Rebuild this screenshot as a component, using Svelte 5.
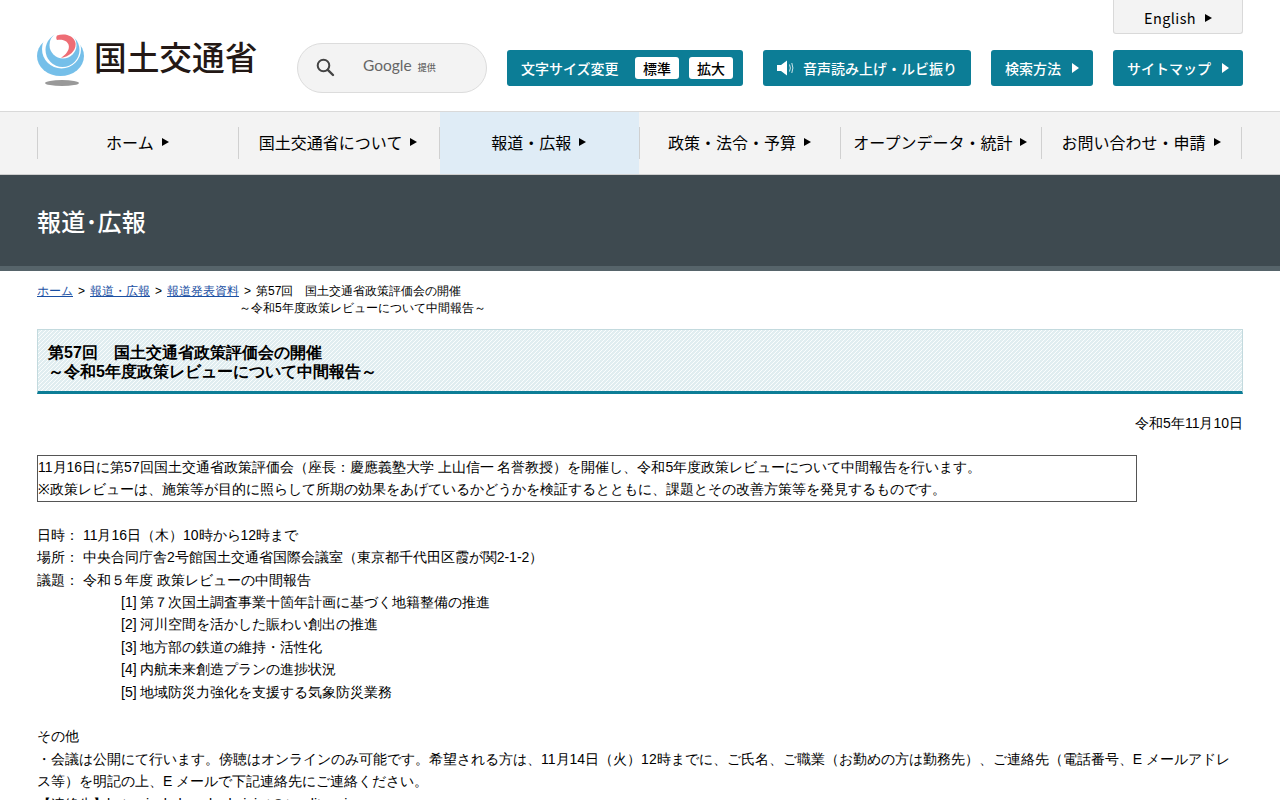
<script>
  const nav = [
    { label: 'ホーム' },
    { label: '国土交通省について' },
    { label: '報道・広報', active: true },
    { label: '政策・法令・予算' },
    { label: 'オープンデータ・統計' },
    { label: 'お問い合わせ・申請' }
  ];
  const items = [
    '[1] 第７次国土調査事業十箇年計画に基づく地籍整備の推進',
    '[2] 河川空間を活かした賑わい創出の推進',
    '[3] 地方部の鉄道の維持・活性化',
    '[4] 内航未来創造プランの進捗状況',
    '[5] 地域防災力強化を支援する気象防災業務'
  ];
</script>

<div class="page">
  <header class="head">
    <div class="logo">
      <svg width="48" height="53" viewBox="0 0 48 53" aria-hidden="true">
        <ellipse cx="23.500" cy="22" rx="23.500" ry="20" fill="#75bfe9"/>
        <circle cx="24.500" cy="15" r="19.500" fill="#fff"/>
        <circle cx="25.500" cy="16" r="17" fill="#75bfe9"/>
        <circle cx="26" cy="11" r="13.500" fill="#fff"/>
        <path d="M20 1.500 C27 -1 37 1 38.500 9 C39.500 16 33 22.500 24 24 C30 20 33 15 31.500 10.500 C30 6.500 25 5 20 6 C19 4.500 19 3 20 1.500 Z" fill="#ee6d75"/>
        <ellipse cx="25" cy="49" rx="17" ry="3" fill="#999"/>
      </svg>
      <span class="logo-text">国土交通省</span>
    </div>

    <div class="search">
      <svg width="20" height="20" viewBox="0 0 20 20" aria-hidden="true">
        <circle cx="7.500" cy="7.500" r="5.800" fill="none" stroke="#444" stroke-width="2"/>
        <path d="M11.800 11.800 L17 17" stroke="#444" stroke-width="2.400" stroke-linecap="round"/>
      </svg>
      <span class="google">Google</span>
      <span class="teikyo">提供</span>
    </div>

    <div class="tools">
      <div class="english-row"><a class="english">English<i class="tri dark"></i></a></div>
      <div class="buttons">
        <div class="btn size">
          <span class="size-label">文字サイズ変更</span>
          <span class="chip">標準</span>
          <span class="chip">拡大</span>
        </div>
        <a class="btn voice">
          <svg width="18" height="16" viewBox="0 0 18 16" aria-hidden="true">
            <path d="M0 5 H4 L10 0.500 V15.500 L4 11 H0 Z" fill="#fff"/>
            <path d="M12.500 4.500 Q14.200 8 12.500 11.500 M14.800 3 Q17 8 14.800 13" fill="none" stroke="#fff" stroke-width="0.800"/>
          </svg>
          音声読み上げ・ルビ振り
        </a>
        <a class="btn method">検索方法<i class="tri white"></i></a>
        <a class="btn map">サイトマップ<i class="tri white"></i></a>
      </div>
    </div>
  </header>

  <nav class="nav">
    <ul>
      {#each nav as n}
        <li class:active={n.active}><a>{n.label}<i class="tri small"></i></a></li>
      {/each}
    </ul>
  </nav>

  <div class="band"><h2>報道･広報</h2></div>

  <main class="main">
    <div class="crumbs">
      <a href="#a">ホーム</a><span class="sep">&gt;</span><a href="#a">報道・広報</a><span class="sep">&gt;</span><a href="#a">報道発表資料</a><span class="crumb-last"><span class="sep">&gt;</span>第57回　国土交通省政策評価会の開催<br />～令和5年度政策レビューについて中間報告～</span>
    </div>

    <h1 class="title">第57回　国土交通省政策評価会の開催<br />～令和5年度政策レビューについて中間報告～</h1>

    <p class="date">令和5年11月10日</p>

    <div class="box">
      11月16日に第57回国土交通省政策評価会（座長：慶應義塾大学 上山信一 名誉教授）を開催し、令和5年度政策レビューについて中間報告を行います。<br />
      ※政策レビューは、施策等が目的に照らして所期の効果をあげているかどうかを検証するとともに、課題とその改善方策等を発見するものです。
    </div>

    <div class="body">
      <p>日時： 11月16日（木）10時から12時まで</p>
      <p>場所： 中央合同庁舎2号館国土交通省国際会議室（東京都千代田区霞が関2-1-2）</p>
      <p>議題： 令和５年度 政策レビューの中間報告</p>
      <ul class="agenda">
        {#each items as it}<li>{it}</li>{/each}
      </ul>
      <p class="other">その他</p>
      <p>・会議は公開にて行います。傍聴はオンラインのみ可能です。希望される方は、11月14日（火）12時までに、ご氏名、ご職業（お勤めの方は勤務先）、ご連絡先（電話番号、E メールアドレス等）を明記の上、E メールで下記連絡先にご連絡ください。</p>
      <p>【連絡先】hqt-seisakuhyouka-kaigi（＠）mlit.go.jp</p>
    </div>
  </main>
</div>

<style>
  :global(body) {
    margin: 0;
    background: #fff;
    color: #000;
    font-family: "Liberation Sans", sans-serif;
  }
  .page { width: 1280px; height: 800px; overflow: hidden; }
  a { color: inherit; text-decoration: none; }
  .head, .nav, .band { font-family: "Noto Sans CJK JP", "Noto Sans", sans-serif; }

  .head {
    height: 111px;
    box-sizing: border-box;
    padding: 0 37px;
    display: flex;
    position: relative;
  }
  .logo { width: 260px; display: flex; align-items: flex-start; padding-top: 34px; box-sizing: border-box; }
  .logo svg { flex: none; }
  .logo-text {
    font-family: "Noto Sans CJK JP", sans-serif;
    font-size: 32.700px;
    line-height: 43px;
    color: #231815;
    font-weight: 500;
    margin-left: 9px;
    white-space: nowrap;
  }
  .search {
    width: 190px;
    height: 50px;
    margin-top: 43px;
    box-sizing: border-box;
    border: 1px solid #dcdcdc;
    border-radius: 25px;
    background: #f3f3f3;
    display: flex;
    align-items: center;
    padding-left: 18px;
    flex: none;
  }
  .google { font-family: "Lato", sans-serif; font-size: 15.500px; color: #666; margin-left: 27px; position: relative; top: -3px; }
  .teikyo { font-family: "Noto Sans CJK JP", sans-serif; font-size: 9px; font-weight: 500; color: #666; margin-left: 6px; position: relative; top: -1px; }

  .tools { flex: 1; display: flex; flex-direction: column; margin-left: 20px; }
  .english-row { display: flex; justify-content: flex-end; height: 50px; }
  .english {
    width: 130px;
    height: 34px;
    box-sizing: border-box;
    background: #f3f3f3;
    border: 1px solid #d9d9d9;
    border-top: 0;
    border-radius: 0 0 3px 3px;
    display: flex;
    align-items: center;
    justify-content: center;
    font-size: 14.500px;
    letter-spacing: 0.400px;
    padding-top: 2px;
  }
  .buttons { display: flex; gap: 20px; }
  .btn {
    height: 36px;
    background: #0c7d96;
    color: #fff;
    border-radius: 3px;
    display: flex;
    align-items: center;
    justify-content: center;
    font-size: 14px;
    font-weight: 500;
    box-sizing: border-box;
    white-space: nowrap;
  }
  .size { width: 236px; padding: 0 10px 0 14px; justify-content: flex-start; }
  .size-label { width: 114px; flex: none; }
  .chip {
    width: 44px;
    height: 22px;
    background: #fff;
    color: #000;
    border-radius: 3px;
    display: flex;
    align-items: center;
    justify-content: center;
    margin-right: 10px;
  }
  .chip:last-child { margin-right: 0; }
  .voice { width: 208px; gap: 8px; }
  .method { width: 102px; }
  .map { width: 130px; }
  .tri {
    display: inline-block;
    width: 0;
    height: 0;
    border-style: solid;
    border-color: transparent;
    border-width: 5px 0 5px 7px;
    margin-left: 11px;
  }
  .tri.white { border-left-color: #fff; }
  .tri.dark { border-width: 4px 0 4px 7px; border-left-color: #000; margin-left: 9px; }
  .tri.small { border-width: 4px 0 4px 7px; border-left-color: #000; margin-left: 8px; }

  .nav {
    height: 64px;
    box-sizing: border-box;
    background: #f3f3f3;
    border-top: 1px solid #d9d9d9;
    border-bottom: 1px solid #cfcfcf;
    padding: 0 38.500px 0 37px;
  }
  .nav ul {
    list-style: none;
    margin: 0;
    padding: 0;
    display: grid;
    grid-template-columns: repeat(6, 1fr);
    height: 62px;
  }
  .nav li { position: relative; display: flex; align-items: center; justify-content: center; font-size: 16px; white-space: nowrap; padding: 0 0 3px 0; box-sizing: border-box; }
  .nav li::before {
    content: "";
    position: absolute;
    left: 0;
    top: 15px;
    height: 32px;
    width: 1px;
    background: #d0d0d0;
  }
  .nav li:last-child::after {
    content: "";
    position: absolute;
    right: 0;
    top: 15px;
    height: 32px;
    width: 1px;
    background: #d0d0d0;
  }
  .nav li.active { background: linear-gradient(#dfecf6, #dfecf6) 1px 0 / 100% 100% no-repeat; }
  .nav a { display: flex; align-items: center; }

  .band {
    height: 96px;
    box-sizing: border-box;
    background: #3e4a50;
    border-bottom: 5px solid #56646a;
    padding: 0 37px;
    display: flex;
    align-items: center;
  }
  .band h2 { margin: 0; color: #fff; font-size: 24px; font-weight: 500; line-height: 1; letter-spacing: 0.200px; }

  .main { padding: 12px 37px 0; font-size: 14px; line-height: 22.400px; }
  .crumbs { font-size: 12px; line-height: 17px; display: flex; align-items: flex-start; }
  .crumbs a { color: #1a4fa3; text-decoration: underline; }
  .sep { margin: 0 5px; }
  .crumb-last { display: block; }
  .title {
    margin: 12px 0 0;
    height: 65px;
    box-sizing: border-box;
    padding: 12.500px 10px 0;
    border: 1px solid #c3dade;
    border-bottom: 3px solid #0c7d96;
    font-size: 16px;
    line-height: 19px;
    font-weight: 700;
    background-image: linear-gradient(135deg, #e0edf0 0 38%, #fafdfd 38% 50%, #e0edf0 50% 88%, #fafdfd 88% 100%);
    background-size: 4px 4px;
  }
  .date { margin: 18px 0 0; text-align: right; }
  .box {
    margin-top: 21px;
    width: 1100px;
    box-sizing: border-box;
    border: 1px solid #555;
    line-height: 22px;
    padding-bottom: 0.800px;
  }
  .body { margin-top: 21.600px; }
  .body p { margin: 0; }
  .agenda { list-style: none; margin: 0; padding: 0 0 0 84px; }
  .other { margin-top: 22.400px !important; }
</style>
